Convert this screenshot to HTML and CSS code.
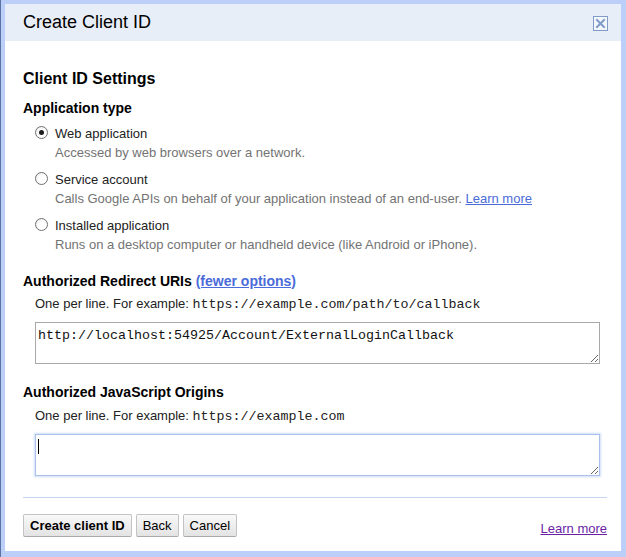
FILE: index.html
```html
<!DOCTYPE html>
<html lang="en">
<head>
<meta charset="utf-8">
<title>Create Client ID</title>
<link rel="stylesheet" href="styles.css">
</head>
<body>
<div class="dialog">
  <div class="dlg-header">
    <span class="dlg-title">Create Client ID</span>
    <span class="close-btn" aria-label="Close">
      <svg width="15" height="15" viewBox="0 0 15 15">
        <rect x="0.5" y="0.5" width="14" height="14" fill="#f4f7fc" stroke="#7f9cc6"/>
        <path d="M4 4 L11 11 M11 4 L4 11" stroke="#7f9cc6" stroke-width="2" stroke-linecap="square"/>
      </svg>
    </span>
  </div>
  <div class="dlg-body">
    <h2 class="section-title">Client ID Settings</h2>
    <h3 class="field-title app-type">Application type</h3>
    <div class="options">
      <div class="option">
        <span class="radio checked"></span>
        <span class="opt-text">
          <span class="opt-label">Web application</span>
          <span class="opt-desc">Accessed by web browsers over a network.</span>
        </span>
      </div>
      <div class="option">
        <span class="radio"></span>
        <span class="opt-text">
          <span class="opt-label">Service account</span>
          <span class="opt-desc">Calls Google APIs on behalf of your application instead of an end-user. <a class="link" href="#">Learn more</a></span>
        </span>
      </div>
      <div class="option">
        <span class="radio"></span>
        <span class="opt-text">
          <span class="opt-label">Installed application</span>
          <span class="opt-desc">Runs on a desktop computer or handheld device (like Android or iPhone).</span>
        </span>
      </div>
    </div>

    <h3 class="field-title redirect">Authorized Redirect URIs <a class="link" href="#">(fewer options)</a></h3>
    <p class="hint">One per line. For example: <code>https://example.com/path/to/callback</code></p>
    <div class="field-wrap">
      <textarea class="uris" spellcheck="false">http://localhost:54925/Account/ExternalLoginCallback</textarea>
    </div>

    <h3 class="field-title origins">Authorized JavaScript Origins</h3>
    <p class="hint origins-hint">One per line. For example: <code>https://example.com</code></p>
    <div class="field-wrap">
      <textarea class="uris focused" spellcheck="false"></textarea>
      <span class="caret"></span>
    </div>

    <div class="divider"></div>

    <div class="actions">
      <div class="buttons">
        <button class="btn primary" type="button">Create client ID</button>
        <button class="btn" type="button">Back</button>
        <button class="btn" type="button">Cancel</button>
      </div>
      <a class="link visited" href="#">Learn more</a>
    </div>
  </div>
</div>
</body>
</html>
```

FILE: styles.css
```css
html,
body {
  margin: 0;
  padding: 0;
}

html {
  background: #bccff9;
}

body {
  font-family: "Liberation Sans", Arial, sans-serif;
  font-size: 13px;
  color: #222;
  background: #bccff9;
  border-left: 1px solid #5a73a3;
  padding: 4px 5px 6px 4px;
  min-height: 557px;
  box-sizing: border-box;
}

.dialog {
  background: #fff;
}

.dlg-header {
  height: 37px;
  background: #e8eef8;
  display: flex;
  align-items: center;
  justify-content: space-between;
  padding: 0 13px 0 18px;
}

.dlg-title {
  font-size: 18px;
  color: #000;
}

.close-btn {
  display: block;
  width: 15px;
  height: 15px;
  margin-top: 2px;
}

.close-btn svg {
  display: block;
}

.dlg-body {
  padding: 27px 14px 14px 18px;
}

.section-title {
  margin: 0;
  font-size: 16px;
  font-weight: bold;
  line-height: 21px;
  color: #000;
}

.field-title {
  margin: 0;
  font-size: 14px;
  font-weight: bold;
  line-height: 19px;
  color: #000;
}

.field-title.app-type {
  margin: 10px 0 6px;
}

.field-title.redirect {
  margin-top: 18px;
}

.field-title.origins {
  margin-top: 19px;
}

.options {
  display: flex;
  flex-direction: column;
  gap: 8px;
  padding-left: 12px;
}

.option {
  display: flex;
  align-items: flex-start;
  gap: 7px;
  line-height: 19px;
}

.radio {
  flex: none;
  width: 13px;
  height: 13px;
  box-sizing: border-box;
  margin-top: 2px;
  border: 1px solid #707070;
  border-radius: 50%;
  background: radial-gradient(circle at 60% 65%, #ffffff 40%, #e6e6e6 100%);
  display: flex;
  align-items: center;
  justify-content: center;
}

.radio.checked::after {
  content: "";
  width: 5px;
  height: 5px;
  border-radius: 50%;
  background: #1c1c1c;
}

.opt-text {
  display: flex;
  flex-direction: column;
}

.opt-label {
  color: #222;
}

.opt-desc {
  color: #737373;
}

.link {
  color: #4a6bd9;
  text-decoration: underline;
}

.link.visited {
  color: #6a1fa6;
}

.hint {
  margin: 3px 0 0;
  padding-left: 12px;
  line-height: 19px;
  color: #222;
}

.hint.origins-hint {
  margin-top: 4px;
}

.hint code {
  font-family: "Liberation Mono", "Courier New", monospace;
  font-size: 13.33px;
  color: #222;
}

.field-wrap {
  position: relative;
  width: 565px;
  margin: 8px 0 0 12px;
}

.uris {
  display: block;
  box-sizing: border-box;
  width: 565px;
  height: 42px;
  margin: 0;
  padding: 5px 2px 2px;
  border: 1px solid #a9a9a9;
  border-radius: 0;
  font-family: "Liberation Mono", "Courier New", monospace;
  font-size: 13.33px;
  line-height: 16px;
  color: #111;
  background: #fff;
  outline: none;
}

.uris.focused {
  border-color: #a9c0eb;
  box-shadow: 0 0 2px 1px rgba(150, 180, 235, 0.45);
}

.caret {
  position: absolute;
  left: 3px;
  top: 5px;
  width: 1px;
  height: 15px;
  background: #000;
}

.divider {
  height: 1px;
  margin-top: 21px;
  background: #c6d6ef;
}

.actions {
  display: flex;
  justify-content: space-between;
  align-items: flex-end;
  margin-top: 16px;
  line-height: 16px;
}

.buttons {
  display: flex;
  gap: 4px;
}

.btn {
  height: 23px;
  box-sizing: border-box;
  margin: 0;
  padding: 0 6px;
  border: 1px solid #c3c3c3;
  border-bottom-color: #a9a9a9;
  border-radius: 2px;
  background: linear-gradient(#f9f9f9, #e3e3e3);
  font-family: "Liberation Sans", Arial, sans-serif;
  font-size: 13px;
  color: #000;
}

.btn.primary {
  font-weight: bold;
}
```
